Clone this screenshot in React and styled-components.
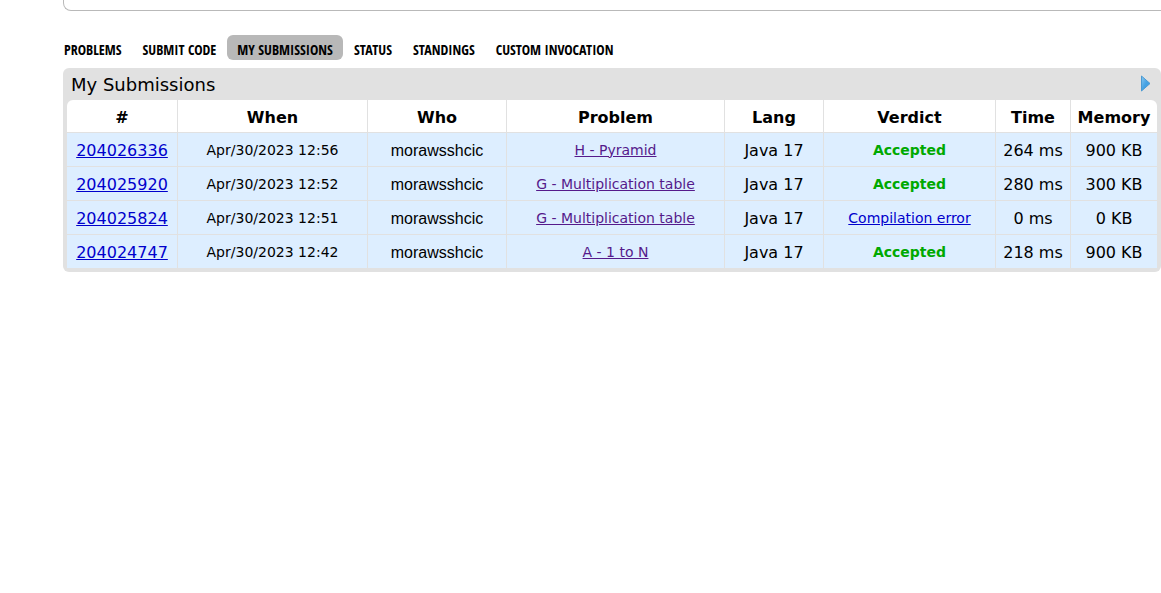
import React from "react";
import styled, { createGlobalStyle } from "styled-components";

const GlobalStyle = createGlobalStyle`
  body {
    margin: 0;
    background: #fff;
    color: #000;
    font-family: Verdana, "DejaVu Sans", sans-serif;
    font-size: 16px;
  }
`;

const Page = styled.div`
  padding-left: 63px;
  overflow: hidden;
`;

const UpperPanel = styled.section`
  box-sizing: border-box;
  height: 11px;
  border: 1px solid #b9b9b9;
  border-width: 0 0 1px 1px;
  border-bottom-left-radius: 8px;
`;

const Nav = styled.nav`
  display: flex;
  gap: 1px;
  margin-top: 24px;
  margin-left: -9px;
`;

const NavLink = styled.a`
  padding: 4px 10px 0;
  border-radius: 6px;
  background: ${(p) => (p.$active ? "#b8b8b8" : "transparent")};
  color: #000;
  font: bold 14px/21px "Open Sans Condensed", "Roboto Condensed", "Noto Sans Condensed", Roboto, sans-serif;
  text-decoration: none;
  text-transform: uppercase;
  white-space: nowrap;
`;

const DataPanel = styled.section`
  margin-top: 8px;
  padding: 0 4px 3px;
  border-radius: 6px;
  background: #e1e1e1;
`;

const PanelHeader = styled.header`
  display: flex;
  align-items: center;
  justify-content: space-between;
  height: 32px;
  padding: 0 6px 0 4px;
`;

const Title = styled.h1`
  margin: 0;
  padding-top: 2px;
  font-size: 18px;
  font-weight: normal;
  line-height: 30px;
`;

const IconButton = styled.button`
  display: flex;
  padding: 0;
  border: 0;
  background: none;
  cursor: pointer;
`;

const TableFrame = styled.div`
  overflow: hidden;
  border-radius: 6px 6px 0 0;
`;

const Table = styled.table`
  width: 100%;
  table-layout: fixed;
  border-collapse: separate;
  border-spacing: 0;
  text-align: center;
`;

const Col = styled.col`
  width: ${(p) => p.$width}px;
`;

const HeadCell = styled.th`
  height: 30px;
  padding: 2px 0 0;
  border-bottom: 1px solid #e1e1e1;
  background: #fff;
  white-space: nowrap;

  & + & {
    border-left: 1px solid #e1e1e1;
  }
`;

const Cell = styled.td`
  box-sizing: border-box;
  height: 34px;
  padding: ${(p) => (p.$small ? 0 : 2)}px 0 0;
  border-bottom: 1px solid #e1e1e1;
  background: #def;
  font-family: ${(p) => (p.$sans ? 'Arial, "Liberation Sans", sans-serif' : "inherit")};
  font-size: ${(p) => (p.$small ? 14 : 16)}px;
  white-space: nowrap;

  & + & {
    border-left: 1px solid #e1e1e1;
  }
`;

const TextLink = styled.a`
  color: ${(p) => (p.$seen ? "#551a8b" : "#0000cc")};
`;

const Accepted = styled.strong`
  color: #00a900;
`;

const navItems = [
  "Problems",
  "Submit Code",
  "My Submissions",
  "Status",
  "Standings",
  "Custom Invocation",
];

const columns = [
  ["#", 110],
  ["When", 190],
  ["Who", 139],
  ["Problem", 218],
  ["Lang", 99],
  ["Verdict", 172],
  ["Time", 75],
  ["Memory", 87],
];

const submissions = [
  { id: "204026336", when: "Apr/30/2023 12:56", problem: "H - Pyramid", accepted: true, time: "264 ms", memory: "900 KB" },
  { id: "204025920", when: "Apr/30/2023 12:52", problem: "G - Multiplication table", accepted: true, time: "280 ms", memory: "300 KB" },
  { id: "204025824", when: "Apr/30/2023 12:51", problem: "G - Multiplication table", accepted: false, time: "0 ms", memory: "0 KB" },
  { id: "204024747", when: "Apr/30/2023 12:42", problem: "A - 1 to N", accepted: true, time: "218 ms", memory: "900 KB" },
];

function ArrowIcon() {
  return (
    <svg width="10" height="18" viewBox="0 0 10 18" aria-hidden="true">
      <defs>
        <linearGradient id="arrowFill" x1="0" y1="0" x2="1" y2="1">
          <stop offset="0" stopColor="#8cc8f0" />
          <stop offset="0.5" stopColor="#46a3e4" />
          <stop offset="1" stopColor="#3f9be0" />
        </linearGradient>
      </defs>
      <path d="M0.5 1L9 8.5L0.5 16Z" fill="url(#arrowFill)" stroke="#4a9ad2" strokeWidth="1" strokeLinejoin="round" />
    </svg>
  );
}

export default function App() {
  return (
    <>
      <GlobalStyle />
      <Page>
        <UpperPanel />
        <Nav>
          {navItems.map((item) => (
            <NavLink key={item} href="#" $active={item === "My Submissions"}>
              {item}
            </NavLink>
          ))}
        </Nav>
        <DataPanel>
          <PanelHeader>
            <Title>My Submissions</Title>
            <IconButton type="button" aria-label="Show filter">
              <ArrowIcon />
            </IconButton>
          </PanelHeader>
          <TableFrame>
            <Table>
              <colgroup>
                {columns.map(([name, width]) => (
                  <Col key={name} $width={width} />
                ))}
              </colgroup>
              <thead>
                <tr>
                  {columns.map(([name]) => (
                    <HeadCell key={name} scope="col">{name}</HeadCell>
                  ))}
                </tr>
              </thead>
              <tbody>
                {submissions.map((s) => (
                  <tr key={s.id}>
                    <Cell><TextLink href="#">{s.id}</TextLink></Cell>
                    <Cell $small>{s.when}</Cell>
                    <Cell $sans>morawsshcic</Cell>
                    <Cell $small><TextLink href="#" $seen>{s.problem}</TextLink></Cell>
                    <Cell>Java 17</Cell>
                    <Cell $small>
                      {s.accepted ? <Accepted>Accepted</Accepted> : <TextLink href="#">Compilation error</TextLink>}
                    </Cell>
                    <Cell>{s.time}</Cell>
                    <Cell>{s.memory}</Cell>
                  </tr>
                ))}
              </tbody>
            </Table>
          </TableFrame>
        </DataPanel>
      </Page>
    </>
  );
}
